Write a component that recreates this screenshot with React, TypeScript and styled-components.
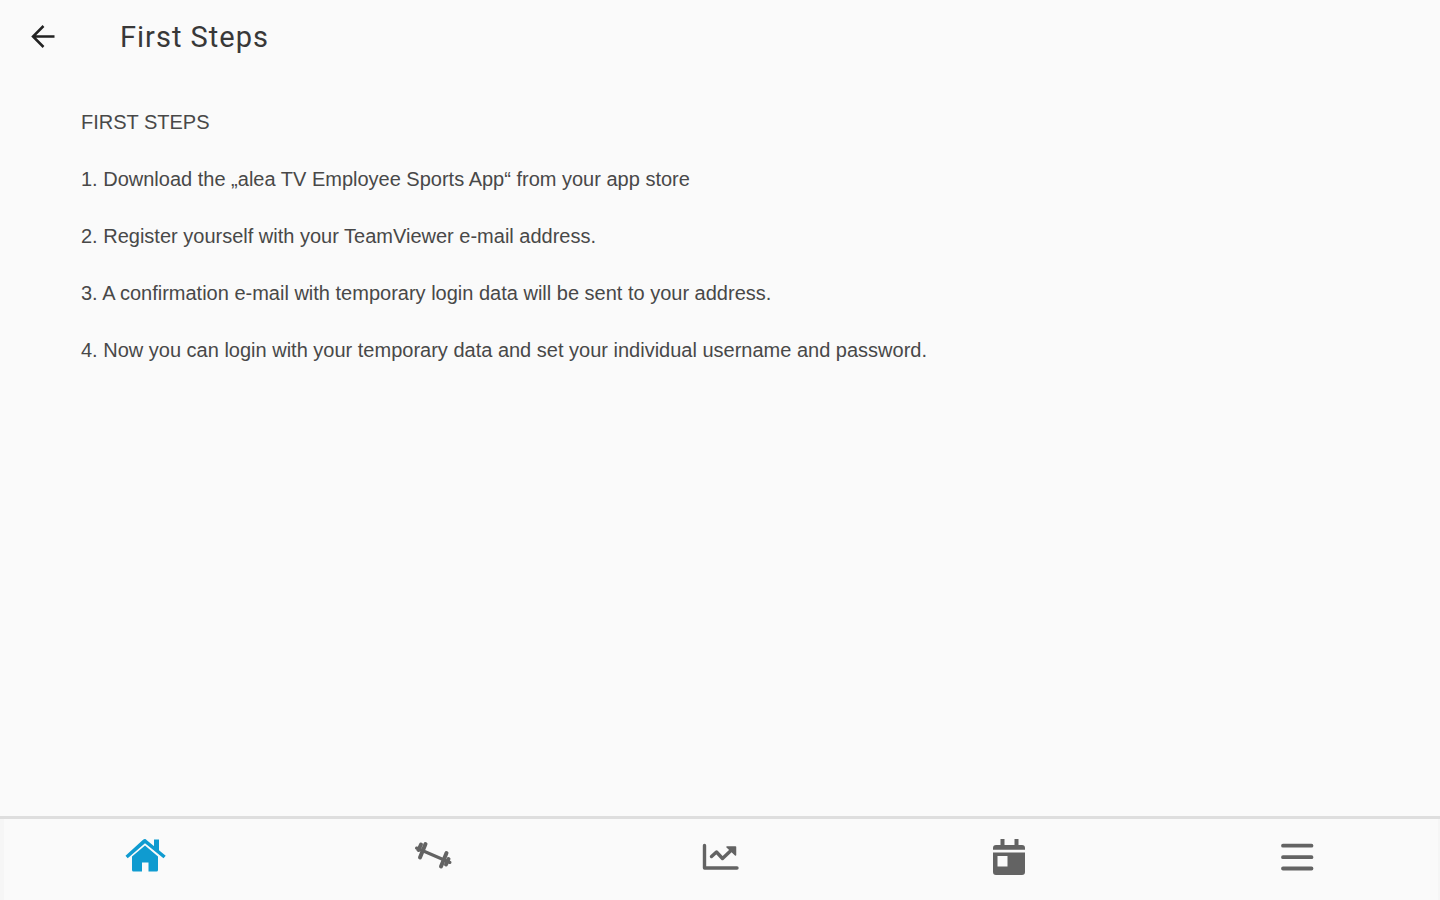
import React from "react";
import styled, { createGlobalStyle } from "styled-components";

const GlobalStyle = createGlobalStyle`
  *, *::before, *::after { box-sizing: border-box; }
  body {
    margin: 0;
    background: #fafafa;
    color: #484848;
    font-family: "Liberation Sans", Arial, sans-serif;
  }
`;

const Screen = styled.div`
  display: flex;
  flex-direction: column;
  min-height: 100vh;
`;

const AppBar = styled.header`
  display: flex;
  align-items: center;
  gap: 60px;
  height: 74px;
  padding: 0 26px;
`;

const BackButton = styled.button`
  display: flex;
  padding: 0;
  border: 0;
  background: none;
  color: #222;
  cursor: pointer;
`;

const Title = styled.h1`
  margin: 0;
  color: #383838;
  font: 400 29px/36px Roboto, sans-serif;
  letter-spacing: 1px;
`;

const Content = styled.main`
  flex: 1;
  padding: 34px 81px;
`;

const Heading = styled.h2`
  margin: 0 0 29px;
  font-size: 20px;
  font-weight: 400;
  line-height: 28px;
`;

const Steps = styled.div`
  display: flex;
  flex-direction: column;
  gap: 29px;
`;

const Step = styled.p`
  margin: 0;
  font-size: 20px;
  line-height: 28px;
`;

const TabBar = styled.nav`
  display: flex;
  height: 84px;
  padding-bottom: 5px;
  border-top: 3px solid #dedede;
  box-shadow: inset 4px 0 #f6f6f6, inset -2px 0 #f6f6f6;
`;

const Tab = styled.button<{ $active?: boolean }>`
  display: flex;
  flex: 1;
  align-items: center;
  justify-content: center;
  padding: 0;
  border: 0;
  background: none;
  color: ${({ $active }) => ($active ? "#0f9bd0" : "#636363")};
  cursor: pointer;
`;

const Icon = styled.svg`
  display: block;
  width: 40px;
  height: 40px;
  overflow: visible;
  fill: none;
  stroke: currentColor;
`;

const BackIcon = styled(Icon)`
  width: 34px;
  height: 34px;
`;

const tabs = [
  {
    label: "Home",
    icon: (
      <g stroke="none" fill="currentColor">
        <path d="M30 2.5h5v12l-5-4.500z" />
        <path d="M21 1.800L41.700 18.800l-2.200 2.500L21 6.200 3.700 21.300 1.500 18.800 18.800 3Q21 1.200 23 3z" />
        <path d="M21 8.500L34 19.500V33q0 1.500-1.500 1.500h-8v-9h-6.500v9H9.500Q8 34.500 8 33V19.500z" />
      </g>
    ),
  },
  {
    label: "Workouts",
    icon: (
      <g strokeLinecap="round">
        <path strokeWidth="3" d="M4.500 11L38 25.500" />
        <path strokeWidth="4" d="M13.500 7L8 20.500M34.500 16L29 29.500" />
        <path strokeWidth="4" d="M9 7.500L6.500 13M36.500 22L34 27.500" />
      </g>
    ),
  },
  {
    label: "Statistics",
    icon: (
      <g strokeLinecap="round" strokeLinejoin="round">
        <path strokeWidth="3.400" d="M4.500 8.500V31h32.500" />
        <path strokeWidth="3.400" d="M11.500 19.500L16.500 15l6 6.500 9-8.500" />
        <path strokeWidth="1.500" fill="currentColor" d="M27 10h8.500v8z" />
      </g>
    ),
  },
  {
    label: "Calendar",
    icon: (
      <g stroke="none" fill="currentColor">
        <path d="M12.500 2h4v6h10V2h4v6H34q3 0 3 3v1.800H5V11q0-3 3-3h4.500z" />
        <path
          fillRule="evenodd"
          d="M5 15.500h32V35q0 3-3 3H8q-3 0-3-3zM9.500 19v10.500h10V19z"
        />
      </g>
    ),
  },
  {
    label: "Menu",
    icon: (
      <path
        strokeWidth="3.800"
        strokeLinecap="round"
        d="M7 8.700h28.500M7 20.200h28.500M7 31.500h28.500"
      />
    ),
  },
];

const steps = [
  "1. Download the „alea TV Employee Sports App“ from your app store",
  "2. Register yourself with your TeamViewer e-mail address.",
  "3. A confirmation e-mail with temporary login data will be sent to your address.",
  "4. Now you can login with your temporary data and set your individual username and password.",
];

export default function App() {
  return (
    <Screen>
      <GlobalStyle />
      <AppBar>
        <BackButton type="button" aria-label="Back">
          <BackIcon viewBox="0 0 34 34" strokeWidth="2.500">
            <path d="M28.500 16.500H7M17.500 6L7 16.500 17.500 27" />
          </BackIcon>
        </BackButton>
        <Title>First Steps</Title>
      </AppBar>
      <Content>
        <Heading>FIRST STEPS</Heading>
        <Steps>
          {steps.map((text) => (
            <Step key={text}>{text}</Step>
          ))}
        </Steps>
      </Content>
      <TabBar aria-label="Main">
        {tabs.map(({ label, icon }, index) => (
          <Tab key={label} type="button" aria-label={label} $active={index === 0}>
            <Icon viewBox="0 0 40 40">{icon}</Icon>
          </Tab>
        ))}
      </TabBar>
    </Screen>
  );
}
